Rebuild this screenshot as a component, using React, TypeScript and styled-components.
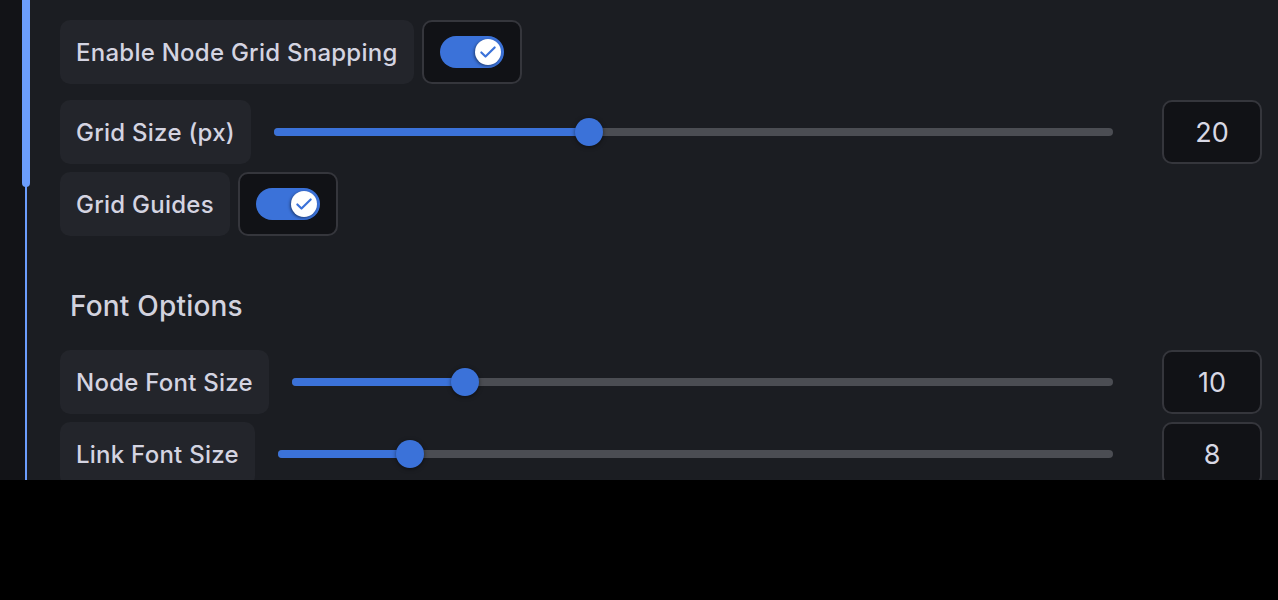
import React from "react";
import styled, { createGlobalStyle } from "styled-components";

const Global = createGlobalStyle`
  html, body { margin: 0; padding: 0; background: #000; }
  body { font-family: Inter, "Noto Sans", sans-serif; }
`;

const Frame = styled.div`
  height: 480px;
  overflow: hidden;
  background: #121317;
  display: flex;
  position: relative;
`;

const Indicator = styled.div`
  position: absolute;
  left: 22px;
  top: -10px;
  width: 8px;
  height: 197px;
  border-radius: 0 0 4px 4px;
  background: #6b9dfc;
`;

const Panel = styled.div`
  margin-left: 25px;
  flex: 1;
  border-left: 2px solid #6b9dfc;
  background: #1b1d22;
  padding: 20px 16px 0 33px;
  display: flex;
  flex-direction: column;
  gap: 8px;
`;

const Row = styled.div<{ $extra?: number }>`
  display: flex;
  align-items: center;
  height: 64px;
  flex-shrink: 0;
  margin-bottom: ${(p) => p.$extra ?? 0}px;
`;

const Label = styled.div`
  height: 64px;
  box-sizing: border-box;
  padding: 0 16px;
  display: flex;
  align-items: center;
  background: #23252b;
  border-radius: 10px;
  color: #d4d4e1;
  font-size: 24px;
  font-weight: 500;
  letter-spacing: 0.25px;
  white-space: nowrap;
`;

const ToggleBox = styled.div`
  margin-left: 8px;
  width: 100px;
  height: 64px;
  box-sizing: border-box;
  border: 2px solid #35363c;
  border-radius: 10px;
  background: #111216;
  display: flex;
  align-items: center;
  justify-content: center;
`;

const Track = styled.div<{ $on: boolean }>`
  width: 64px;
  height: 32px;
  border-radius: 16px;
  background: ${(p) => (p.$on ? "#3b72d9" : "#4b4d53")};
  position: relative;
`;

const Knob = styled.div<{ $on: boolean }>`
  position: absolute;
  top: 3px;
  left: ${(p) => (p.$on ? "35px" : "3px")};
  width: 26px;
  height: 26px;
  border-radius: 50%;
  background: #fff;
  box-shadow: -1px 1px 3px rgba(0, 0, 0, 0.45);
  display: flex;
  align-items: center;
  justify-content: center;
`;

const SliderWrap = styled.div`
  flex: 1;
  margin: 0 49px 0 23px;
  height: 28px;
  position: relative;
  display: flex;
  align-items: center;
`;

const SliderTrack = styled.div`
  width: 100%;
  height: 8px;
  border-radius: 4px;
  background: #4b4d53;
  position: relative;
`;

const SliderFill = styled.div`
  position: absolute;
  left: 0;
  top: 0;
  bottom: 0;
  border-radius: 4px;
  background: #3b72d9;
`;

const Thumb = styled.div`
  position: absolute;
  top: 0;
  width: 28px;
  height: 28px;
  margin-left: -14px;
  border-radius: 50%;
  background: #3b72d9;
  box-shadow: 0 1px 4px rgba(0, 0, 0, 0.5);
`;

const ValueBox = styled.div`
  width: 100px;
  height: 64px;
  box-sizing: border-box;
  border: 2px solid #35363c;
  border-radius: 10px;
  background: #111216;
  color: #d8d8e4;
  font-size: 27px;
  display: flex;
  align-items: center;
  justify-content: center;
`;

const Heading = styled.h3`
  margin: 45px 0 19px 10px;
  color: #d2d2de;
  font-size: 28px;
  font-weight: 500;
  letter-spacing: 0.2px;
  line-height: 34px;
`;

const Check = () => (
  <svg width="20" height="20" viewBox="0 0 24 24" fill="none" stroke="#3b72d9" strokeWidth="2.6" strokeLinecap="round" strokeLinejoin="round">
    <path d="M4 12.5l5 5L20 6.5" />
  </svg>
);

const Toggle = ({ on }: { on: boolean }) => (
  <ToggleBox>
    <Track $on={on}>
      <Knob $on={on}>{on && <Check />}</Knob>
    </Track>
  </ToggleBox>
);

const Slider = ({ value, min, max }: { value: number; min: number; max: number }) => {
  const pct = ((value - min) / (max - min)) * 100;
  return (
    <>
      <SliderWrap>
        <SliderTrack>
          <SliderFill style={{ width: `${pct}%` }} />
        </SliderTrack>
        <Thumb style={{ left: `${pct}%` }} />
      </SliderWrap>
      <ValueBox>{value}</ValueBox>
    </>
  );
};

export default function App() {
  return (
    <>
      <Global />
      <Frame>
        <Panel>
          <Row $extra={8}>
            <Label>Enable Node Grid Snapping</Label>
            <Toggle on />
          </Row>
          <Row>
            <Label>Grid Size (px)</Label>
            <Slider value={20} min={2} max={50} />
          </Row>
          <Row>
            <Label>Grid Guides</Label>
            <Toggle on />
          </Row>
          <Heading>Font Options</Heading>
          <Row>
            <Label>Node Font Size</Label>
            <Slider value={10} min={2} max={40} />
          </Row>
          <Row>
            <Label>Link Font Size</Label>
            <Slider value={8} min={2} max={40} />
          </Row>
        </Panel>
        <Indicator />
      </Frame>
    </>
  );
}
